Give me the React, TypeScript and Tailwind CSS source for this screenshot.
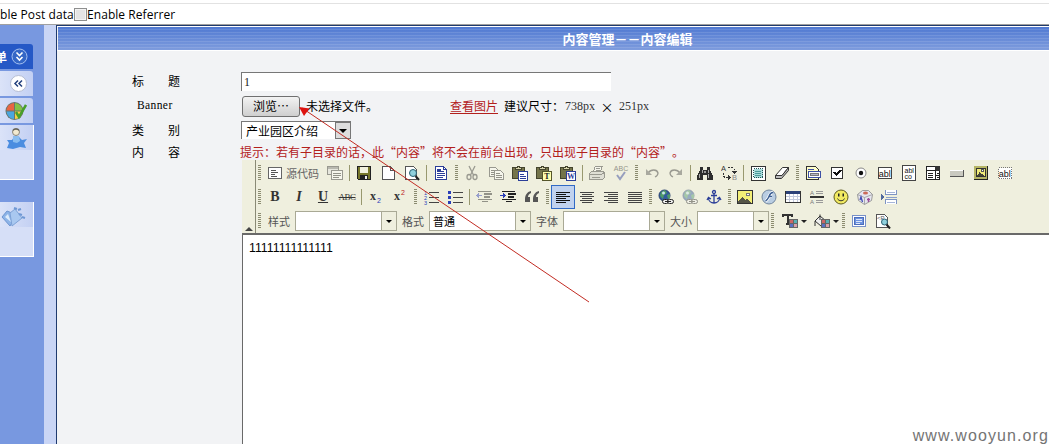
import type { ReactNode } from "react";

const CJK = "font-['Noto_Sans_CJK_SC',sans-serif]";
const SERIF = "font-['Liberation_Serif','Noto_Sans_CJK_SC',serif]";

function Svg({ children, w = 16, dim = false }: { children: ReactNode; w?: number; dim?: boolean }) {
  return (
    <svg
      width={w}
      height={16}
      viewBox={`0 0 ${w} 16`}
      fill="none"
      stroke="#333"
      shapeRendering="crispEdges"
      className={dim ? "block shrink-0 opacity-45" : "block shrink-0"}
    >
      {children}
    </svg>
  );
}

function Cell({ children, active = false }: { children: ReactNode; active?: boolean }) {
  return (
    <div
      className={
        active
          ? "flex h-6 w-6 shrink-0 items-center justify-center border border-[#316ac5] bg-[#c1d2ee]"
          : "flex h-6 w-6 shrink-0 items-center justify-center"
      }
    >
      {children}
    </div>
  );
}

function Sep() {
  return (
    <div className="flex w-[5px] shrink-0 justify-center">
      <div className="h-4 w-px bg-[#98986f]" />
    </div>
  );
}

function Grip() {
  return (
    <div className="flex w-[7px] shrink-0 justify-center">
      <div className="h-4 w-[3px] bg-[repeating-linear-gradient(to_bottom,#8b8b70_0px,#8b8b70_1px,#efefde_1px,#efefde_2px)]" />
    </div>
  );
}

function Lines({ rows, color = "#222" }: { rows: number[][]; color?: string }) {
  return (
    <>
      {rows.map(([x, y, w], i) => (
        <rect key={i} x={x} y={y} width={w} height={1} fill={color} stroke="none" />
      ))}
    </>
  );
}

const SourceIcon = () => (
  <Svg>
    <rect x="1.5" y="2.5" width="13" height="11" fill="#fff" stroke="#666" />
    <Lines rows={[[4, 5, 5], [4, 7, 7], [4, 9, 4], [4, 11, 6]]} color="#555" />
  </Svg>
);
const TemplatesIcon = () => (
  <Svg dim>
    <rect x=".5" y="1.5" width="11" height="8" fill="#ddd" />
    <rect x="1" y="2" width="10" height="2" fill="#777" stroke="none" />
    <rect x="4.5" y="5.5" width="11" height="9" fill="#fff" />
    <Lines rows={[[6, 8, 8], [6, 10, 8], [6, 12, 6]]} />
  </Svg>
);
const SaveIcon = () => (
  <Svg>
    <path d="M1.5 1.5h13v13h-12l-1-1z" fill="#77772b" stroke="#222" />
    <rect x="4" y="2" width="8" height="6" fill="#f1f1df" stroke="none" />
    <rect x="4" y="10" width="8" height="5" fill="#222" stroke="none" />
    <rect x="9" y="11" width="2" height="3" fill="#eee" stroke="none" />
  </Svg>
);
const NewIcon = () => (
  <Svg>
    <path d="M2.5 1.5h8l4 4v9h-12z" fill="#fff" stroke="#555" />
    <path d="M10.5 1.5v4h4" stroke="#555" />
  </Svg>
);
const PreviewIcon = () => (
  <Svg>
    <path d="M1.5 1.5h8l3 3v10h-11z" fill="#fff" stroke="#555" />
    <circle cx="9" cy="8" r="3.5" fill="#8fd0dc" stroke="#2c6172" shapeRendering="auto" />
    <path d="M11.5 11l3.5 4" stroke="#222" strokeWidth="2" shapeRendering="auto" />
  </Svg>
);
const PageTplIcon = () => (
  <Svg>
    <path d="M2.5 1.5h8l3 3v10h-11z" fill="#fff" stroke="#2b3e98" />
    <path d="M10.5 1.5v3h3" stroke="#2b3e98" />
    <Lines rows={[[4, 4, 4], [4, 6, 7], [4, 8, 8], [4, 10, 8], [4, 12, 6]]} color="#2b3e98" />
    <rect x="4" y="4" width="4" height="3" fill="#2b3e98" stroke="none" />
  </Svg>
);
const CutIcon = () => (
  <Svg dim>
    <g shapeRendering="auto" strokeWidth="1.3">
      <path d="M5 1l4.500 9M11 1L6.500 10" />
      <ellipse cx="5" cy="12" rx="2" ry="2.500" />
      <ellipse cx="11" cy="12" rx="2" ry="2.500" />
    </g>
  </Svg>
);
const CopyIcon = () => (
  <Svg dim>
    <path d="M1.500 2.500h6l2 2v7h-8z" fill="#fff" />
    <Lines rows={[[3, 5, 4], [3, 7, 4], [3, 9, 3]]} />
    <path d="M6.500 5.500h6l3 3v6h-9z" fill="#fff" />
    <Lines rows={[[8, 8, 4], [8, 10, 6], [8, 12, 6]]} />
  </Svg>
);
function PasteIcon({ kind }: { kind: "page" | "T" | "W" }) {
  return (
    <Svg>
      <rect x=".5" y="2.500" width="12" height="11" fill="#74744a" stroke="#44442d" />
      <path d="M3.500 4.500v-2h2v-1.500h2v1.500h2v2z" fill="#d8d6ae" stroke="#44442d" />
      <rect x="6.500" y="6.500" width="9" height="9" fill={kind === "T" ? "#ffffb0" : "#fff"} stroke={kind === "T" ? "#55552a" : "#2b3e98"} />
      {kind === "page" ? (
        <Lines rows={[[8, 9, 4], [8, 11, 6], [8, 13, 6]]} color="#2b3e98" />
      ) : (
        <text x="11" y="14" textAnchor="middle" stroke="none" fill={kind === "T" ? "#222" : "#2b3e98"} className="font-['Liberation_Serif',serif] text-[8px] font-bold">
          {kind}
        </text>
      )}
    </Svg>
  );
}
const PrintIcon = () => (
  <Svg dim>
    <path d="M4.500 6.500l2-5.500h7l-2 5.500" fill="#fff" />
    <path d="M.5 8.500l2-2h12l1 2v4l-2 2h-13z" fill="#ccc" />
    <path d="M.5 9.500h12l3-2M3 12.500h8" />
    <path d="M7 3.500h4M6.500 5h4" />
  </Svg>
);
const SpellIcon = () => (
  <Svg dim>
    <text x="8" y="6" textAnchor="middle" stroke="none" fill="#222" className="font-['Liberation_Sans',sans-serif] text-[7px]">ABC</text>
    <path d="M4 10l3 4 5-7" stroke="#2b3e98" strokeWidth="2" shapeRendering="auto" />
  </Svg>
);
function UndoIcon({ flip = false }: { flip?: boolean }) {
  return (
    <Svg dim>
      <g transform={flip ? "matrix(-1 0 0 1 16 0)" : undefined} shapeRendering="auto">
        <path d="M4 8c3-4 9-4 10 0 0 2-1 3-3 4" strokeWidth="1.300" />
        <path d="M2 4v6h6z" fill="#555" stroke="none" />
      </g>
    </Svg>
  );
}
const FindIcon = () => (
  <Svg>
    <path d="M3 2h3v3h4V2h3v3l3 6v4h-6v-5H6v5H0v-4l3-6z" fill="#2d2d2d" stroke="none" />
    <path d="M2.500 9v4M11.500 9v4M5 5v3M11 5v3" stroke="#aaa" />
    <rect x="7" y="6" width="2" height="2" fill="#999" stroke="none" />
  </Svg>
);
const ReplaceIcon = () => (
  <Svg>
    <text x="0" y="6" stroke="none" fill="#333" className="font-['Liberation_Sans',sans-serif] text-[7.500px]">A</text>
    <text x="11" y="15" stroke="none" fill="#888" className="font-['Liberation_Sans',sans-serif] text-[7.500px]">B</text>
    <path d="M7 2.500h4l2.500 2v1M2.500 8v3l1.500 1.500h4" stroke="#333" strokeDasharray="2 1" />
    <path d="M11 6h5l-2.500 3zM7 10v5l2.500-2.500z" fill="#333" stroke="none" />
  </Svg>
);
const SelectAllIcon = () => (
  <Svg>
    <rect x="1" y="1" width="14" height="14" fill="#fff" stroke="#333" />
    <rect x="3.500" y="3.500" width="9" height="9" fill="#a8dada" stroke="#255" strokeDasharray="1 1" />
    <path d="M5 6.500h6M5 8.500h6M5 10.500h6" stroke="#4a9999" />
  </Svg>
);
const EraserIcon = () => (
  <Svg>
    <g shapeRendering="auto">
      <path d="M1.500 10.500L8.500 2.500h6l-6.500 8z" fill="#fff" stroke="#333" />
      <path d="M1.500 10.500v3h6l7-8v-3l-6.500 8z" fill="#bbb" stroke="#333" />
    </g>
  </Svg>
);
const FormIcon = () => (
  <Svg>
    <path d="M1.500 1.500h9l3 3v10h-12z" fill="#ffffc8" stroke="#333" />
    <rect x="3.500" y="6.500" width="12" height="6" fill="#fff" stroke="#3d50a5" />
    <rect x="5.500" y="8.500" width="8" height="2" fill="#b7b7c9" stroke="#777" />
    <path d="M3 4.500h6" stroke="#3d50a5" />
  </Svg>
);
const CheckIcon = () => (
  <Svg>
    <rect x="2.500" y="2.500" width="11" height="11" fill="#fff" stroke="#333" />
    <path d="M5 7l2.500 3L12 5" stroke="#111" strokeWidth="2" />
  </Svg>
);
const RadioIcon = () => (
  <Svg>
    <g shapeRendering="auto">
      <circle cx="8" cy="8" r="5" fill="#fff" stroke="#888" />
      <circle cx="8" cy="8" r="2.200" fill="#111" stroke="none" />
    </g>
  </Svg>
);
function FieldIcon({ dashed = false }: { dashed?: boolean }) {
  return (
    <Svg>
      <rect x="1.500" y="2.500" width="13" height="11" fill="#fff" stroke={dashed ? "#777" : "#444"} strokeDasharray={dashed ? "1 1" : undefined} />
      <text x="7.800" y="12" textAnchor="middle" stroke="none" fill="#111" className="font-['Liberation_Sans',sans-serif] text-[9px]">abl</text>
    </Svg>
  );
}
const AreaIcon = () => (
  <Svg>
    <rect x="1.500" y=".5" width="13" height="15" fill="#fff" stroke="#444" />
    <text x="3.500" y="7.500" stroke="none" fill="#111" className="font-['Liberation_Sans',sans-serif] text-[7px]">abl</text>
    <text x="3.500" y="14" stroke="none" fill="#111" className="font-['Liberation_Sans',sans-serif] text-[7px]">co</text>
  </Svg>
);
const ListIcon = () => (
  <Svg>
    <rect x="1.500" y="1.500" width="13" height="4" fill="#fff" stroke="#222" />
    <rect x="1.500" y="5.500" width="13" height="9" fill="#fff" stroke="#222" />
    <rect x="10" y="1" width="5" height="5" fill="#333" stroke="none" />
    <path d="M10.500 5v10M10.500 10h4" stroke="#222" />
    <Lines rows={[[3, 8, 5], [3, 10, 5], [3, 12, 5], [12, 8, 2], [12, 12, 2]]} />
  </Svg>
);
const ButtonIcon = () => (
  <Svg>
    <rect x="1" y="5" width="14" height="7" fill="#c9c9c0" stroke="none" />
    <path d="M1 11.500h14M14.500 5v7" stroke="#555" />
    <path d="M1 5.500h13" stroke="#fff" />
  </Svg>
);
function PictureIcon({ framed = false }: { framed?: boolean }) {
  return framed ? (
    <Svg>
      <rect x="1" y="1" width="13" height="13" fill="#b5b565" stroke="none" />
      <path d="M1 14.500h14M14.500 1v14" stroke="#222" />
      <rect x="3.500" y="3.500" width="9" height="8" fill="#f0eb7a" stroke="#333" />
      <circle cx="9.500" cy="5.500" r="1" fill="#fff" stroke="#555" />
      <path d="M4 11l2.500-4 2.500 2 3 2z" fill="#444438" stroke="none" />
    </Svg>
  ) : (
    <Svg>
      <rect x=".5" y="1.500" width="15" height="13" fill="#f4ef77" stroke="#333" />
      <circle cx="11" cy="5.500" r="1.500" fill="#fff" stroke="#777" />
      <path d="M1 13l4-5 3 3 2-1 5 4H1z" fill="#555548" stroke="none" />
    </Svg>
  );
}

function Glyph({ children, cls }: { children: ReactNode; cls: string }) {
  return <span className={`font-['Liberation_Serif',serif] leading-none text-[#333] ${cls}`}>{children}</span>;
}
function ScriptIcon({ sup = false }: { sup?: boolean }) {
  return (
    <Svg>
      <text x="2" y="11" stroke="none" fill="#333" className="font-['Liberation_Serif',serif] text-[12px] font-bold">x</text>
      <text x="9" y={sup ? 6 : 14} stroke="none" fill={sup ? "#b22" : "#2b3eb8"} className="font-['Liberation_Sans',sans-serif] text-[7px]">2</text>
    </Svg>
  );
}
function ListStyleIcon({ ordered = false }: { ordered?: boolean }) {
  return (
    <Svg>
      <Lines rows={[[6, 3, 10], [6, 8, 10], [6, 13, 10]]} color="#444" />
      {[1, 6, 11].map((y, i) =>
        ordered ? (
          <text key={y} x="1" y={y + 4.5} stroke="none" fill="#2b3eb8" className="font-['Liberation_Sans',sans-serif] text-[5.500px]">{i + 1}</text>
        ) : (
          <rect key={y} x="1" y={y + 1} width="3" height="3" fill="#2b3eb8" stroke="none" />
        ),
      )}
    </Svg>
  );
}
function IndentIcon({ out = false }: { out?: boolean }) {
  return (
    <Svg dim={out}>
      <Lines rows={[[2, 2, 13], [8, 4, 8], [8, 5, 8], [8, 7, 6], [8, 8, 6], [2, 10, 14], [6, 12, 6]]} color="#222" />
      <path d={out ? "M0 6.500l3-3v6zM3 6h3v1H3z" : "M6 6.500l-3-3v6zM0 6h3v1H0z"} fill="#2b3eb8" stroke="none" />
    </Svg>
  );
}
const QuoteIcon = () => (
  <Svg>
    <path d="M7 2C3 3 1 6 1 10v3h5V8H4c0-2 1-3 3-4zM15 2c-4 1-6 4-6 8v3h5V8h-2c0-2 1-3 3-4z" fill="#555" stroke="none" shapeRendering="auto" />
  </Svg>
);
function AlignIcon({ mode }: { mode: "left" | "center" | "right" | "full" }) {
  const short = mode === "full" ? 14 : 10;
  const sx = mode === "center" ? 3 : mode === "right" ? 5 : 1;
  return (
    <Svg>
      <Lines rows={[[1, 3, 14], [sx, 5, short], [1, 7, 14], [sx, 9, short], [1, 11, 14], [sx, 13, short]]} color={mode === "left" ? "#111" : "#444"} />
    </Svg>
  );
}
function LinkIcon({ dim = false }: { dim?: boolean }) {
  return (
    <Svg dim={dim}>
      <g shapeRendering="auto">
        <circle cx="6.500" cy="6.500" r="5.500" fill="#315b9c" stroke="#29416e" />
        <path d="M3 3l4-2 2 3-3 2-1 4-3-3zM9 6l3-1v4l-2 1z" fill="#4f9b66" stroke="none" />
        <circle cx="5.500" cy="4" r="1.500" fill="#c9e3ee" stroke="none" />
        <rect x="4.500" y="10.500" width="6" height="4" rx="2" fill="#eee" stroke="#222" />
        <rect x="9.500" y="10.500" width="6" height="4" rx="2" fill="#eee" stroke="#222" />
        <path d="M7 12.500h6" stroke="#222" />
      </g>
    </Svg>
  );
}
const AnchorIcon = () => (
  <Svg>
    <g shapeRendering="auto" stroke="#2b3e98" strokeWidth="1.300">
      <circle cx="8" cy="3" r="1.500" />
      <path d="M8 5v9M5 6.500h6M2.500 9c0 3 2.500 5 5.500 5s5.500-2 5.500-5M1 11l1.500-2.500L5 10M15 11l-1.500-2.500L11 10" />
    </g>
  </Svg>
);
const FlashIcon = () => (
  <Svg>
    <g shapeRendering="auto">
      <circle cx="8" cy="8" r="7" fill="#b9cde2" stroke="#71869e" />
      <path d="M12 3.500c-3 0-3.500 3-4.500 5s-1.500 3-3 3.500M7.500 7.500h3.500" stroke="#fff" strokeWidth="3" />
      <path d="M12 3.500c-3 0-3.500 3-4.500 5s-1.500 3-3 3.500M7.500 7.500h3.500" stroke="#3c5f92" strokeWidth="1.500" />
    </g>
  </Svg>
);
const TableIcon = () => (
  <Svg>
    <rect x=".5" y="2.500" width="15" height="11" fill="#fff" stroke="#333" />
    <rect x="1" y="2" width="14" height="3" fill="#2b4178" stroke="none" />
    <path d="M1 7.500h14M1 10.500h14M4.500 5v8M8.500 5v8M12.500 5v8" stroke="#c3cadd" />
  </Svg>
);
const RuleIcon = () => (
  <Svg>
    <rect x="1" y="7" width="14" height="2" fill="#333" stroke="none" />
    <Lines rows={[[7, 2, 7], [7, 4, 7], [7, 11, 7], [7, 13, 7]]} color="#999" />
    <text x="1" y="6" stroke="none" fill="#777" className="font-['Liberation_Sans',sans-serif] text-[6px]">A</text>
    <text x="1" y="15" stroke="none" fill="#777" className="font-['Liberation_Sans',sans-serif] text-[6px]">A</text>
  </Svg>
);
const SmileyIcon = () => (
  <Svg>
    <g shapeRendering="auto">
      <circle cx="8" cy="8" r="7" fill="#f1ea62" stroke="#5e5a1e" />
      <path d="M4.500 9.500c1 3 6 3 7 0" stroke="#333" />
      <rect x="5" y="4.500" width="1.500" height="3" fill="#222" stroke="none" />
      <rect x="9.500" y="4.500" width="1.500" height="3" fill="#222" stroke="none" />
    </g>
  </Svg>
);
const SpecialIcon = () => (
  <Svg>
    <g shapeRendering="auto">
      <path d="M.5 5.500l5-4h6l4 4-1 6-7 4-6-4z" fill="#e6e6ef" stroke="#888" strokeWidth=".8" />
      <path d="M.5 5.500l7 3 8-3M7.500 8.500v7" stroke="#999" strokeWidth=".8" />
      <ellipse cx="8.500" cy="4" rx="2.500" ry="1.500" fill="#cc6b58" stroke="none" />
      <path d="M3 11l1-3 1.500 5" stroke="#3f4ab5" strokeWidth="1.300" />
      <path d="M10 10.500h3M11.500 9v4" stroke="#9a4c9a" strokeWidth="1.300" />
    </g>
  </Svg>
);
const BreakIcon = () => (
  <Svg>
    <path d="M4.500 1v4.500h11V1M4.500 15v-4.500h11V15" fill="#fff" stroke="#7e94c4" />
    <Lines rows={[[6, 3, 8], [6, 13, 8]]} color="#a5b5d9" />
    <Lines rows={[[5, 8, 11]]} color="#8ba0cc" />
    <path d="M0 5l4 3-4 3z" fill="#51699e" stroke="none" />
  </Svg>
);
const Swatches = () => (
  <g stroke="none">
    <rect x="7" y="6" width="9" height="9" fill="#666" />
    <rect x="8" y="7" width="3" height="3" fill="#c66" />
    <rect x="12" y="7" width="3" height="3" fill="#58b0b4" />
    <rect x="8" y="11" width="3" height="3" fill="#5b70c4" />
    <rect x="12" y="11" width="3" height="3" fill="#d9a0a8" />
  </g>
);
function ColorButton({ fill = false }: { fill?: boolean }) {
  return (
    <div className="flex w-8 shrink-0 items-center justify-center gap-[3px]">
      <Svg>
        {fill ? (
          <path d="M1 8l5-5 6 5-5 5zM6 7V1.500M1 8v5" fill="#eee" stroke="#333" shapeRendering="auto" />
        ) : (
          <path d="M1 4V2h9v2M6 2v9M4 11h4" stroke="#333" strokeWidth="2" />
        )}
        <Swatches />
      </Svg>
      <div className="h-0 w-0 border-x-[3px] border-t-[3px] border-x-transparent border-t-[#222]" />
    </div>
  );
}
const MaxIcon = () => (
  <Svg>
    <rect x="1.500" y="2.500" width="13" height="11" fill="#fff" stroke="#7790c8" />
    <rect x="3.500" y="4.500" width="9" height="7" fill="#6d92df" stroke="#4c6ebb" />
    <Lines rows={[[5, 6, 6], [5, 8, 6], [5, 10, 4]]} color="#dce6fa" />
  </Svg>
);
const BlocksIcon = () => (
  <Svg>
    <path d="M1.500 1.500h8l3 3v10h-11z" fill="#fff" stroke="#555" />
    <text x="2" y="7" stroke="none" fill="#555" className="font-['Liberation_Sans',sans-serif] text-[6px]">&lt;P</text>
    <circle cx="9.500" cy="9" r="3" fill="#8fd0dc" stroke="#2c6172" shapeRendering="auto" />
    <path d="M11.500 11.500l3.500 4" stroke="#222" strokeWidth="2" shapeRendering="auto" />
  </Svg>
);

function Combo({ label, value, small = false }: { label: string; value?: string; small?: boolean }) {
  return (
    <>
      <span className="w-8 shrink-0 pl-[5px] text-[11px] leading-5 text-[#555]">{label}</span>
      <div className={`flex h-5 shrink-0 border border-[#a9a995] bg-white ${small ? "w-[72px]" : "w-[102px]"}`}>
        <span className="flex-1 pl-[3px] text-[11px] leading-[18px] text-black">{value}</span>
        <div className="flex w-[15px] items-center justify-center border-l border-[#a9a995] bg-[#efefde]">
          <div className="h-0 w-0 border-x-[3px] border-t-[3px] border-x-transparent border-t-black" />
        </div>
      </div>
    </>
  );
}

function Toolbar() {
  return (
    <div className="flex h-[73px] bg-[#efefde]">
      <div className="flex w-[14px] shrink-0 flex-col items-center justify-end border-r border-[#8a8a76] pb-[2px]">
        <div className="h-0 w-0 border-x-[4px] border-b-[4px] border-x-transparent border-b-[#444]" />
      </div>
      <div className="flex flex-col pt-px">
        <div className="flex h-6 items-center">
          <Grip />
          <Cell><SourceIcon /></Cell>
          <span className="-ml-px w-[37px] shrink-0 text-[11px] leading-6 text-[#666]">源代码</span>
          <Cell><TemplatesIcon /></Cell>
          <Sep />
          <Cell><SaveIcon /></Cell>
          <Cell><NewIcon /></Cell>
          <Cell><PreviewIcon /></Cell>
          <Sep />
          <Cell><PageTplIcon /></Cell>
          <Grip />
          <Cell><CutIcon /></Cell>
          <Cell><CopyIcon /></Cell>
          <Cell><PasteIcon kind="page" /></Cell>
          <Cell><PasteIcon kind="T" /></Cell>
          <Cell><PasteIcon kind="W" /></Cell>
          <Sep />
          <Cell><PrintIcon /></Cell>
          <Cell><SpellIcon /></Cell>
          <Grip />
          <Cell><UndoIcon /></Cell>
          <Cell><UndoIcon flip /></Cell>
          <Sep />
          <Cell><FindIcon /></Cell>
          <Cell><ReplaceIcon /></Cell>
          <Sep />
          <Cell><SelectAllIcon /></Cell>
          <Cell><EraserIcon /></Cell>
          <Grip />
          <Cell><FormIcon /></Cell>
          <Cell><CheckIcon /></Cell>
          <Cell><RadioIcon /></Cell>
          <Cell><FieldIcon /></Cell>
          <Cell><AreaIcon /></Cell>
          <Cell><ListIcon /></Cell>
          <Cell><ButtonIcon /></Cell>
          <Cell><PictureIcon framed /></Cell>
          <Cell><FieldIcon dashed /></Cell>
        </div>
        <div className="flex h-6 items-center">
          <Grip />
          <Cell><Glyph cls="text-[14px] font-bold">B</Glyph></Cell>
          <Cell><Glyph cls="text-[14px] font-bold italic">I</Glyph></Cell>
          <Cell><Glyph cls="text-[14px] font-bold underline">U</Glyph></Cell>
          <Cell><Glyph cls="text-[9px] tracking-[-0.5px] line-through">ABC</Glyph></Cell>
          <Sep />
          <Cell><ScriptIcon /></Cell>
          <Cell><ScriptIcon sup /></Cell>
          <Grip />
          <Cell><ListStyleIcon ordered /></Cell>
          <Cell><ListStyleIcon /></Cell>
          <Sep />
          <Cell><IndentIcon out /></Cell>
          <Cell><IndentIcon /></Cell>
          <Cell><QuoteIcon /></Cell>
          <Grip />
          <Cell active><AlignIcon mode="left" /></Cell>
          <Cell><AlignIcon mode="center" /></Cell>
          <Cell><AlignIcon mode="right" /></Cell>
          <Cell><AlignIcon mode="full" /></Cell>
          <Grip />
          <Cell><LinkIcon /></Cell>
          <Cell><LinkIcon dim /></Cell>
          <Cell><AnchorIcon /></Cell>
          <Grip />
          <Cell><PictureIcon /></Cell>
          <Cell><FlashIcon /></Cell>
          <Cell><TableIcon /></Cell>
          <Cell><RuleIcon /></Cell>
          <Cell><SmileyIcon /></Cell>
          <Cell><SpecialIcon /></Cell>
          <Cell><BreakIcon /></Cell>
        </div>
        <div className="flex h-6 items-center">
          <Grip />
          <Combo label="样式" />
          <Combo label="格式" value="普通" />
          <Combo label="字体" />
          <Combo label="大小" small />
          <Grip />
          <div className="w-0.5" />
          <ColorButton />
          <ColorButton fill />
          <div className="-ml-0.5 flex">
            <Grip />
          </div>
          <Cell><MaxIcon /></Cell>
          <Cell><BlocksIcon /></Cell>
        </div>
      </div>
    </div>
  );
}

function Sidebar() {
  return (
    <div className="flex w-[44px] shrink-0 flex-col bg-[#7898e0] pt-[19px]">
      <div className="flex h-[25px] w-[33px] items-center justify-between overflow-hidden rounded-tr-[3px] bg-[#2558c6] pr-[5px]">
        <span className="-ml-[5px] text-[12px] font-bold leading-none text-white">单</span>
        <svg width="17" height="17" viewBox="0 0 17 17" fill="none">
          <circle cx="8.500" cy="8.500" r="7.500" fill="#3567c6" stroke="#a5c0f0" />
          <path d="M5.500 4.500l3 3 3-3M5.500 9l3 3 3-3" stroke="#fff" strokeWidth="1.600" />
        </svg>
      </div>
      <div className="mt-[2px] flex h-[25px] w-[33px] items-center justify-end rounded-tr-[3px] bg-gradient-to-r from-[#dbe3f8] to-[#c3d0f3] pr-[6px]">
        <svg width="17" height="17" viewBox="0 0 17 17" fill="none">
          <circle cx="8.500" cy="8.500" r="8" fill="#fff" stroke="#b5bdd2" />
          <path d="M8 5.500l-3 3 3 3M12 5.500l-3 3 3 3" stroke="#23407c" strokeWidth="1.500" />
        </svg>
      </div>
      <div className="mt-[2px] flex h-[25px] w-[33px] items-center justify-end rounded-tr-[3px] bg-gradient-to-r from-[#d5def7] to-[#c3d0f3] pr-[6px]">
        <svg width="23" height="21" viewBox="0 0 23 21">
          <circle cx="10.500" cy="11" r="9" fill="#69756d" />
          <path d="M10 3a8 8 0 0 0-7.500 7.500H10z" fill="#e96543" />
          <path d="M11 3a8 8 0 0 1 7.500 7.500H11z" fill="#83c247" />
          <path d="M10 11.500H2.500A8 8 0 0 0 10 19z" fill="#4aa6df" />
          <path d="M11 11.500h7.500A8 8 0 0 1 11 19z" fill="#f6cf45" />
          <path d="M12 12l3 5 7-12" fill="none" stroke="#489f2b" strokeWidth="2.500" />
        </svg>
      </div>
      <div className="mt-[2px] flex h-[55px] w-[34px] flex-col border-b border-r border-white bg-[#d6dff7]">
        <div className="flex h-[25px] items-center justify-end bg-gradient-to-r from-[#dbe3f8] to-[#c3d0f3] pr-[6px]">
          <svg width="22" height="23" viewBox="0 0 22 23">
            <path d="M2 14h5l2-3h5l3 3 5-1-3 4 2 5-6-1-7 2-6-1 2-5z" fill="#4b8de0" />
            <path d="M8 10h6l1 5-3 2-4-1z" fill="#8abdf0" />
            <circle cx="11" cy="6" r="3.500" fill="#f3ead0" stroke="#8a867a" />
            <path d="M8 4.500c1-2 5-2 6 0" fill="none" stroke="#66635a" strokeWidth="1.500" />
          </svg>
        </div>
      </div>
      <div className="mt-[22px] flex h-[55px] w-[34px] flex-col border-b border-r border-white bg-[#d6dff7]">
        <div className="flex h-[25px] items-center bg-gradient-to-r from-[#dbe3f8] to-[#c3d0f3] pt-[3px]">
          <svg width="26" height="23" viewBox="0 0 26 23" fill="none">
            <path d="M2 12l5-6 5 2 1 8-3 5z" fill="#8db4e8" stroke="#6d95d0" />
            <path d="M10 8l5-4 7 9-10 8z" fill="#a9c8f0" stroke="#7ea2d6" />
            <path d="M14 3l3 1M18 5l3-1M19 9l3 1M22 12l3 1" stroke="#6f98d4" strokeWidth="2" />
            <path d="M5 12l3-3 3 8z" fill="#dcebfc" />
          </svg>
        </div>
      </div>
    </div>
  );
}

function Label({ children }: { children: ReactNode }) {
  return <span className="w-[182px] shrink-0 pl-[74px] text-[12px] leading-none">{children}</span>;
}

function Quoted({ children }: { children: ReactNode }) {
  return (
    <>
      <span className="inline-block w-3 text-right">“</span>
      {children}
      <span className="inline-block w-3">”</span>
    </>
  );
}

export default function App() {
  return (
    <div lang="zh-CN" className={`relative flex h-[444px] w-[1049px] flex-col overflow-hidden whitespace-nowrap bg-white text-[12px] text-black ${CJK}`}>
      <div className="h-[4px] shrink-0 border-b border-[#e2e2e2]" />
      <div className="flex h-[21px] shrink-0 items-center border-b border-[#a0a0a0] pt-px font-['Open_Sans',sans-serif] text-[12px]">
        <span className="w-[74px] leading-none tracking-[0.08px]">ble Post data</span>
        <span className="h-[13px] w-[13px] border border-[#8e8f8f] bg-[#e5e5e5] shadow-[inset_0_0_0_1px_#f4f4f4]" />
        <span className="leading-none tracking-[0.06px]">Enable Referrer</span>
      </div>
      <div className="flex min-h-0 flex-1">
        <Sidebar />
        <div className="w-3 shrink-0 bg-[#c9d5f5]" />
        <div className="flex min-w-0 flex-1 flex-col border-l border-t border-[#1f3a6e] bg-[#f2f3f5]">
          <div className="h-px shrink-0 bg-white" />
          <div className="ml-px flex h-[23px] shrink-0 items-center justify-center bg-[repeating-linear-gradient(to_bottom,transparent_0px,transparent_2px,#ffffff1c_2px,#ffffff1c_3px),linear-gradient(to_bottom,#5079d2,#7e9cdd)]">
            <span className="pl-[148px] text-[13px] font-bold leading-none text-white">内容管理－－内容编辑</span>
          </div>
          <div className="h-px shrink-0 bg-white" />
          <div className="flex flex-1 flex-col pl-px pt-[20px]">
            <div className="flex h-[20px] shrink-0 items-center">
              <Label>标　　题</Label>
              <div className={`ml-px h-[19px] w-[370px] border-l border-t border-[#777] bg-white pl-[2px] pt-[2px] text-[12px] leading-[15px] text-[#222] ${SERIF}`}>1</div>
            </div>
            <div className="mt-[3px] flex h-[24px] shrink-0 items-center">
              <span className={`w-[184px] shrink-0 pl-[79px] text-[11.500px] leading-none tracking-[0.400px] ${SERIF}`}>Banner</span>
              <div className="flex h-[21px] w-[58px] shrink-0 items-center rounded-[3px] border border-[#707070] bg-gradient-to-b from-[#f3f3f3] to-[#cfcfcf] pl-[10px] leading-none">浏览…</div>
              <span className="w-[150px] pl-[6px] leading-none">未选择文件。</span>
              <span className="w-[54px] leading-[14px] text-[#b3201c] underline underline-offset-2">查看图片</span>
              <span className="w-[61px] leading-none">建议尺寸：</span>
              <span className={`text-[12px] leading-none text-[#333] ${SERIF}`}>738px</span>
              <span className="w-[24px] text-center text-[13px] leading-none">×</span>
              <span className={`text-[12px] leading-none text-[#333] ${SERIF}`}>251px</span>
            </div>
            <div className="mt-[3px] flex h-[18px] shrink-0 items-center">
              <Label>类　　别</Label>
              <div className="ml-px flex h-[18px] w-[110px] border-l border-t border-[#777] bg-white">
                <span className="flex-1 pl-[4px] leading-[17px]">产业园区介绍</span>
                <div className="flex w-[16px] items-center justify-center border border-[#777] bg-[#ddd]">
                  <div className="h-0 w-0 border-x-[4px] border-t-[4px] border-x-transparent border-t-black" />
                </div>
              </div>
            </div>
            <div className="mt-[4px] flex h-[17px] shrink-0 items-center">
              <Label>内　　容</Label>
              <span className="leading-none text-[#b3201c]">
                提示：若有子目录的话，此<Quoted>内容</Quoted>将不会在前台出现，只出现子目录的<Quoted>内容</Quoted>。
              </span>
            </div>
            <div className="ml-[184px] flex flex-1 flex-col">
              <Toolbar />
              <div className="flex-1 border-l border-t-2 border-[#696969] bg-white pl-[6px] pt-[6px] font-['Liberation_Sans',sans-serif] text-[12.300px] leading-[14px]">
                11111111111111
              </div>
            </div>
          </div>
        </div>
      </div>
      <svg width="1049" height="444" viewBox="0 0 1049 444" className="pointer-events-none absolute inset-0">
        <path d="M302 108L589 302" stroke="#c22b22" strokeWidth="1" />
        <path d="M299 107l10.500 1.500-5.500 7.500z" fill="#dd1410" />
      </svg>
      <span className="absolute bottom-[-1px] right-0 font-['Liberation_Sans',sans-serif] text-[16px] leading-[18px] tracking-[1.1px] text-[#747474]">www.wooyun.org</span>
    </div>
  );
}
